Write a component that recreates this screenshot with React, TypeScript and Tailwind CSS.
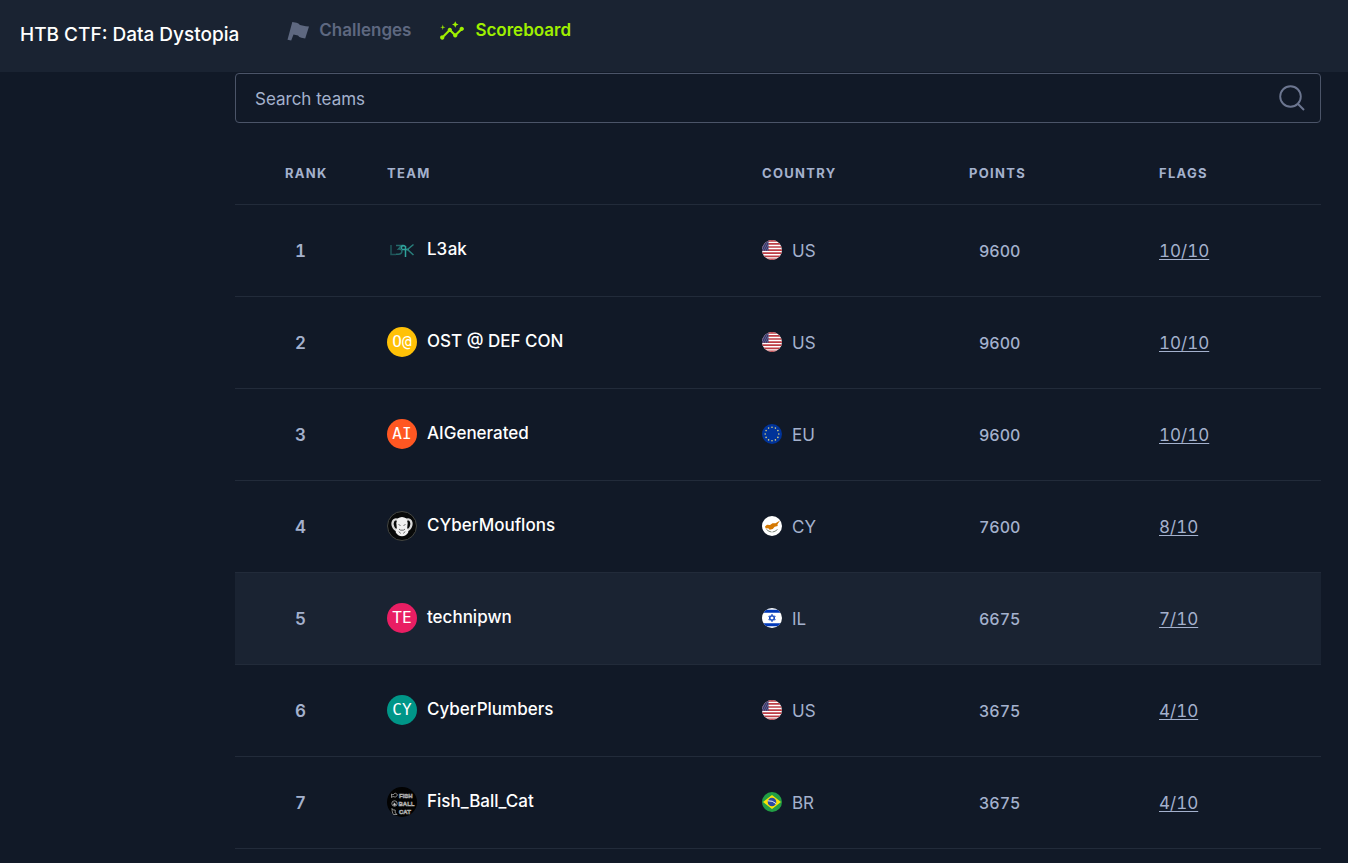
import { useState } from "react";
import type { ReactNode } from "react";
import { MdInsights } from "react-icons/md";

type Country = "US" | "EU" | "CY" | "IL" | "BR";

interface Team {
  name: string;
  country: Country;
  points: number;
  flags: string;
  avatar: ReactNode;
  active?: boolean;
}

function Initials({ text, color }: { text: string; color: string }) {
  return (
    <span
      aria-hidden="true"
      className={`flex size-[30px] shrink-0 items-center justify-center rounded-full font-['DejaVu_Sans_Mono',monospace] text-base leading-none font-normal text-white ${color}`}
    >
      {text}
    </span>
  );
}

function L3akLogo() {
  return (
    <svg aria-hidden="true" viewBox="0 0 30 30" className="size-[30px] shrink-0" fill="none" strokeWidth="1.500">
      <path d="M4 10v9.500h5" stroke="#1f5559" />
      <path d="M9 10.500h5.500l-3 3.500c5-.6 4.300 5.500-.5 5.300H9" stroke="#246a6b" />
      <path d="M14.500 14v-2.500q1.500-1.700 4 0V22M15 14.500h7" stroke="#2fa39c" />
      <path d="M26.500 9.500 20.500 14.500l6 5.500" stroke="#287f7c" />
    </svg>
  );
}

function MouflonLogo() {
  return (
    <svg aria-hidden="true" viewBox="0 0 30 30" className="size-[30px] shrink-0">
      <circle cx="15" cy="15" r="14.500" fill="#080909" stroke="#444642" />
      <path d="M11 9C6.500 6.500 4 12 6.500 16.500q1 2 3 2.700M19 9c4.500-2.500 7 3 4.500 7.500q-1 2-3 2.700" fill="none" stroke="#d8d8d8" strokeWidth="2.200" />
      <path d="M10.500 7.500Q15 4.500 19.500 7.500l1.200 4.500-.5 5q2 2 1 4.500-2 3.500-6.200 3.800-4.200-.3-6.200-3.800-1-2.500 1-4.500l-.5-5Z" fill="#f1f1f1" />
      <path
        d="M11.500 13.500l2 1M18.500 13.500l-2 1M12 18q1 1.500 3 1.200 2 .3 3-1.200M12 20.500l1.500 2M18 20.500l-1.500 2"
        fill="none"
        stroke="#4a4a4a"
        strokeWidth=".8"
      />
    </svg>
  );
}

function FishLogo() {
  return (
    <svg aria-hidden="true" viewBox="0 0 30 30" className="size-[30px] shrink-0">
      <circle cx="15" cy="15" r="15" fill="#020202" />
      <g fill="#1a1a1a" stroke="#b4b4b4" strokeWidth=".6" fontFamily="Liberation Sans, sans-serif" fontSize="6" fontWeight="700">
        <text x="12" y="11">FISH</text>
        <text x="11.500" y="19">BALL</text>
        <text x="12" y="27">CAT</text>
      </g>
      <g fill="none" stroke="#aaa" strokeWidth=".8">
        <path d="m4.500 7 1.500 1Q8.500 4.500 10.500 8 9 11.500 6 9.500L4.500 10.500Z" />
        <circle cx="7.500" cy="16.500" r="2.700" />
        <path d="m7 15.500 1 2M5 21.500l1.200 1.500h2v3l2 1.500H6.500c-1-1.500-1.500-3.500-1.500-6Z" />
      </g>
      <circle cx="7.500" cy="17.500" r="1.200" fill="#ccc" />
    </svg>
  );
}

const euStars = Array.from({ length: 12 }, (_, i) => {
  const a = (i * Math.PI) / 6;
  return { x: 10 + 6.8 * Math.sin(a), y: 10 - 6.8 * Math.cos(a) };
});

function FlagArt({ country }: { country: Country }) {
  switch (country) {
    case "US":
      return (
        <>
          <rect width="20" height="20" fill="#fff" />
          <path
            d="M0 .8h20M0 3.900h20M0 7h20M0 10.100h20M0 13.200h20M0 16.300h20M0 19.300h20"
            stroke="#bd3d44"
            strokeWidth="1.700"
          />
          <rect width="6.500" height="10.800" fill="#3c3b6e" />
          <path d="M1 2h5.500M0 4h6.500M1 6h5.500M0 8h6.500M1 10h5.500" stroke="#b6b6d0" strokeWidth=".7" strokeDasharray=".7 1.300" />
        </>
      );
    case "EU":
      return (
        <>
          <rect width="20" height="20" fill="#039" />
          {euStars.map((s, i) => (
            <circle key={i} cx={s.x} cy={s.y} r=".8" fill="#d8ce80" />
          ))}
        </>
      );
    case "CY":
      return (
        <>
          <rect width="20" height="20" fill="#fff" />
          <path d="M3 10.500l2-1.800 3 .2 2.500-1.700h3L18 4.500l-2.500 3.700.2 1.800-3 .8-2 2.200-3 .8-1.500-1.500-2.500.2Z" fill="#d57800" />
          <path d="M4.500 13.500q2.500 2.300 5 2.500M15.500 13.500q-2.500 2.300-5 2.500" fill="none" stroke="#6c7768" strokeWidth=".9" />
        </>
      );
    case "IL":
      return (
        <>
          <rect width="20" height="20" fill="#fff" />
          <path d="M0 3.300h20M0 16.700h20" stroke="#0038b8" strokeWidth="3" />
          <path d="m10 6.300 3.200 5.500H6.800ZM10 13.700 6.800 8.200h6.400Z" fill="none" stroke="#0038b8" strokeWidth=".9" />
        </>
      );
    case "BR":
      return (
        <>
          <rect width="20" height="20" fill="#229e45" />
          <path d="m10 3 9 7-9 7-9-7Z" fill="#f8e509" />
          <circle cx="10" cy="10" r="4.300" fill="#2b49a3" />
          <path d="M6 8.800q4.500-.4 8 2.800" fill="none" stroke="#fff" strokeWidth=".9" />
        </>
      );
  }
}

function CountryFlag({ country }: { country: Country }) {
  return (
    <svg aria-hidden="true" viewBox="0 0 20 20" className="size-5 shrink-0 rounded-full">
      <FlagArt country={country} />
    </svg>
  );
}

const teams: Team[] = [
  { name: "L3ak", country: "US", points: 9600, flags: "10/10", avatar: <L3akLogo /> },
  { name: "OST @ DEF CON", country: "US", points: 9600, flags: "10/10", avatar: <Initials text="O@" color="bg-[#ffc107]" /> },
  { name: "AIGenerated", country: "EU", points: 9600, flags: "10/10", avatar: <Initials text="AI" color="bg-[#ff5722]" /> },
  { name: "CYberMouflons", country: "CY", points: 7600, flags: "8/10", avatar: <MouflonLogo /> },
  { name: "technipwn", country: "IL", points: 6675, flags: "7/10", avatar: <Initials text="TE" color="bg-[#e91e63]" />, active: true },
  { name: "CyberPlumbers", country: "US", points: 3675, flags: "4/10", avatar: <Initials text="CY" color="bg-[#009688]" /> },
  { name: "Fish_Ball_Cat", country: "BR", points: 3675, flags: "4/10", avatar: <FishLogo /> },
];

function Header() {
  return (
    <header className="flex h-[72px] bg-[#1a2332] pl-5 font-medium">
      <h1 className="mt-[21px] text-[19px] leading-7 text-white">HTB CTF: Data Dystopia</h1>
      <nav className="mt-[17px] ml-12 flex h-7 items-center gap-7 text-[17px] font-semibold">
        <a href="#challenges" className="flex items-center gap-2.5 text-[#5e6880]">
          <svg aria-hidden="true" viewBox="0 0 22 20" className="h-5 w-[22px]" fill="currentColor">
            <path d="M5.300 1 9.500 1.700q2 .2 3.500 2.200l3.500.8q2 .8 5.500.8l-3.800 12-3.800-.8q-2.400-.5-3.400-2.300l-4.500-.8-2.300 5.800L.5 18.800Z" />
          </svg>
          Challenges
        </a>
        <a href="#scoreboard" aria-current="page" className="flex items-center gap-2.5 text-[#9fef00]">
          <MdInsights aria-hidden="true" className="size-[26px]" />
          Scoreboard
        </a>
      </nav>
    </header>
  );
}

export default function App() {
  const [query, setQuery] = useState("");
  const q = query.trim().toLowerCase();

  return (
    <div className="min-h-screen bg-[#111927] font-['Inter',sans-serif] text-[#a4b1cd]">
      <Header />
      <main className="mt-px mr-[27px] ml-[235px]">
        <div className="flex h-[50px] items-center rounded-[4px] border border-[#4b5468] pr-[15px] pl-[19px]">
          <input
            type="search"
            aria-label="Search teams"
            placeholder="Search teams"
            value={query}
            onChange={(e) => setQuery(e.target.value)}
            className="h-full min-w-0 flex-1 bg-transparent pt-0.5 text-[17px] text-[#a4b1cd] outline-none placeholder:text-[#a4b1cd]"
          />
          <button type="button" aria-label="Search" className="text-[#6c7690]">
            <svg aria-hidden="true" viewBox="0 0 26 26" className="size-[26px]" fill="none" stroke="currentColor" strokeWidth="1.900">
              <circle cx="11.500" cy="11.500" r="10.300" />
              <path d="m19 19 6 6" />
            </svg>
          </button>
        </div>

        <table className="mt-[19px] w-full table-fixed border-collapse text-left">
          <thead>
            <tr className="h-[62px] border-b border-[#222b3a] text-[13px] tracking-widest">
              <th scope="col" className="w-[152px] pt-0.5 pl-[50px] font-bold">RANK</th>
              <th scope="col" className="pt-0.5 font-bold">TEAM</th>
              <th scope="col" className="w-[207px] pt-0.5 font-bold">COUNTRY</th>
              <th scope="col" className="w-[190px] pt-0.5 font-bold">POINTS</th>
              <th scope="col" className="w-[162px] pt-0.5 font-bold">FLAGS</th>
            </tr>
          </thead>
          <tbody>
            {teams.map((team, i) =>
              team.name.toLowerCase().includes(q) ? (
                <tr
                  key={team.name}
                  className={`h-[92px] border-b border-[#222b3a] text-[17px] leading-6 tabular-nums ${team.active ? "bg-[#1a2332]" : ""}`}
                >
                  <td className="pt-0.5 pl-[60px] font-semibold">{i + 1}</td>
                  <td>
                    <div className="flex items-center gap-2.5 font-medium text-white">
                      {team.avatar}
                      <span className="pb-0.5">{team.name}</span>
                    </div>
                  </td>
                  <td>
                    <div className="flex items-center gap-2.5">
                      <CountryFlag country={team.country} />
                      <span className="pt-0.5">{team.country}</span>
                    </div>
                  </td>
                  <td className="pt-0.5 pl-2.5 text-base font-medium">{team.points}</td>
                  <td className="pt-0.5">
                    <a href={`#team-${i + 1}`} className="underline underline-offset-2">
                      {team.flags}
                    </a>
                  </td>
                </tr>
              ) : null,
            )}
          </tbody>
        </table>
      </main>
    </div>
  );
}
